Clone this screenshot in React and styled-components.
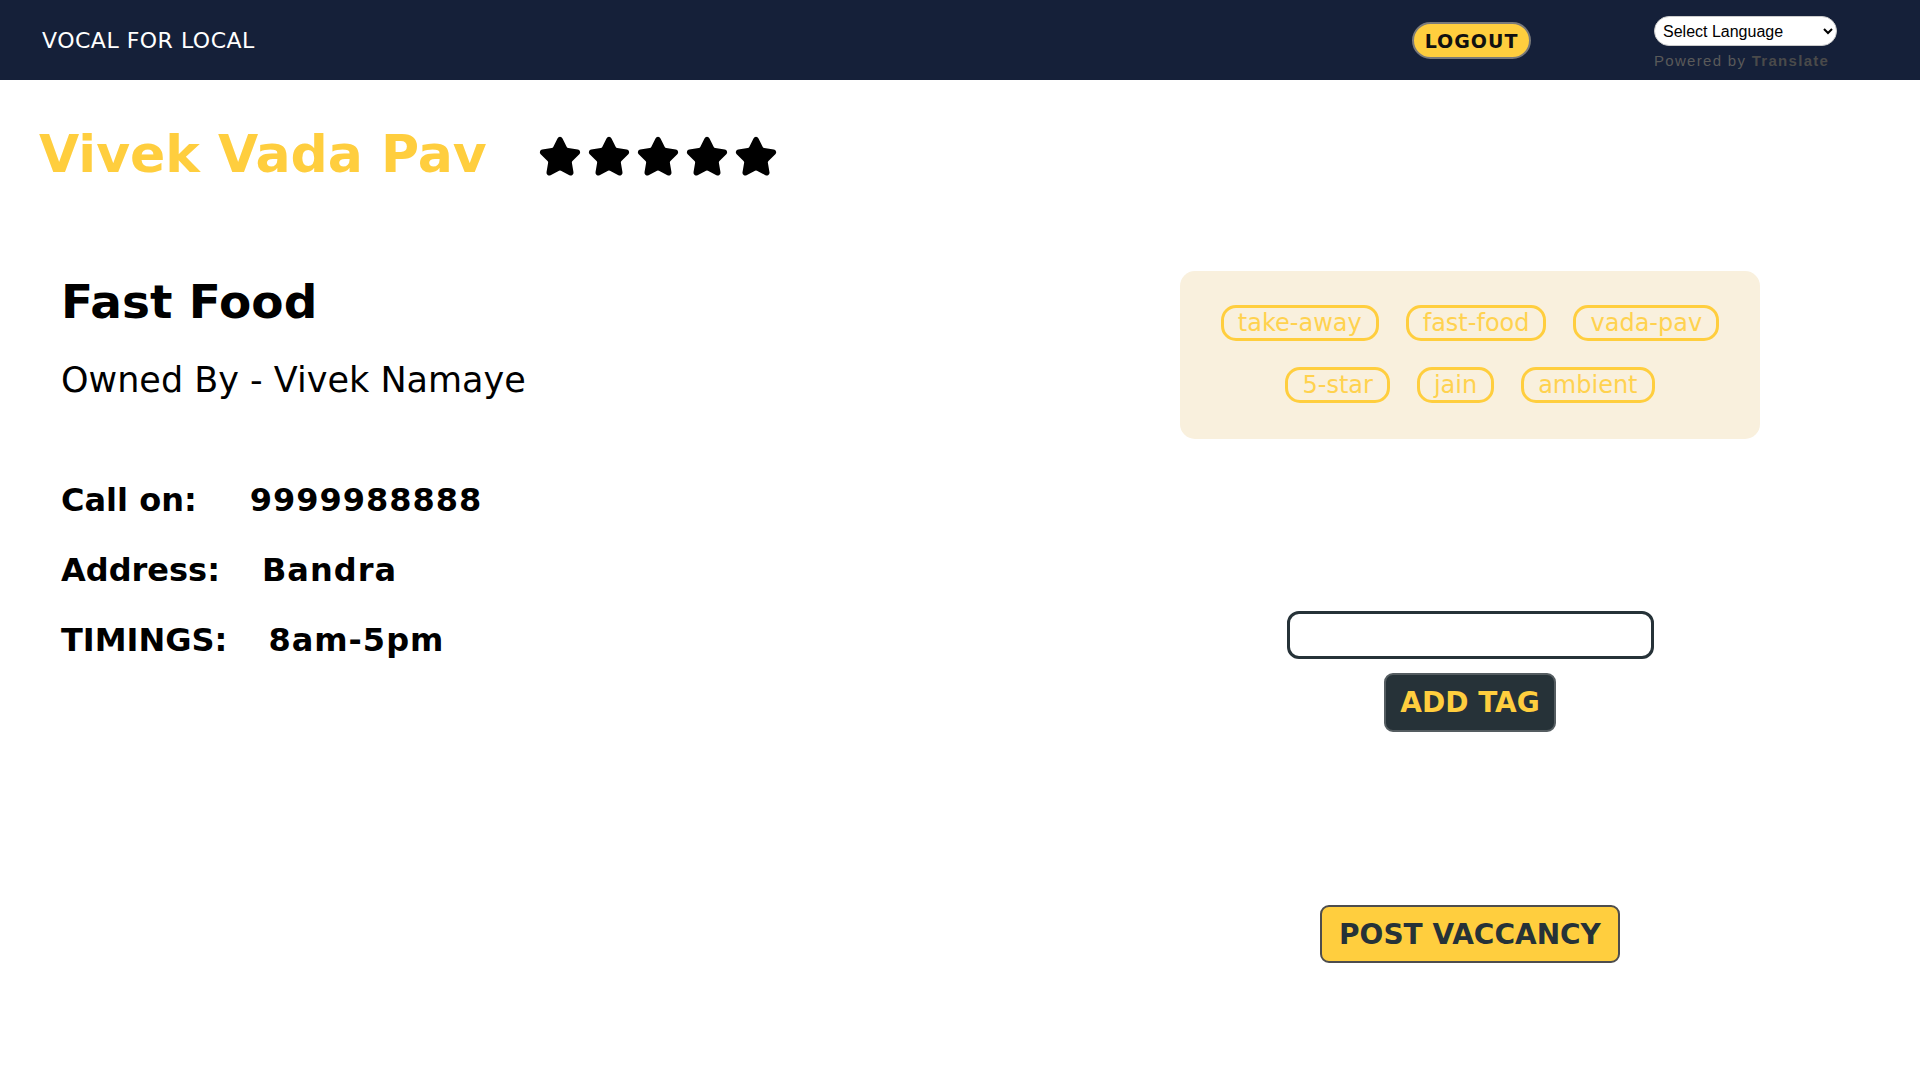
import React from 'react';
import styled, { createGlobalStyle } from 'styled-components';
import { Star } from 'lucide-react';

const YELLOW = '#FFCE3E';
const NAVY = '#152039';
const SLATE = '#263238';
const FONT = `'DejaVu Sans', 'Noto Sans', sans-serif`;

const GlobalStyle = createGlobalStyle`
    * {
        box-sizing: border-box;
    }
    body {
        margin: 0;
        background: #ffffff;
        font-family: ${FONT};
        color: #000000;
    }
`

const Nav = styled.nav `
    display: flex;
    justify-content: space-between;
    align-items: flex-start;
    height: 80px;
    padding: 0 83px 0 42px;
    background-color: ${NAVY};
`

const Brand = styled.div `
    margin-top: 30px;
    font-size: 22px;
    line-height: 1;
    letter-spacing: 0.5px;
    color: #ffffff;
`

const NavRight = styled.div `
    display: flex;
    align-items: flex-start;
    gap: 123px;
`

const LogoutButton = styled.button `
    margin-top: 22px;
    width: 119px;
    height: 37px;
    border: 2px solid #7a7a7a;
    border-radius: 20px;
    background-color: ${YELLOW};
    font-family: ${FONT};
    font-size: 19px;
    font-weight: 600;
    letter-spacing: 1px;
    color: #111111;
    cursor: pointer;
`

const Translate = styled.div `
    display: flex;
    flex-direction: column;
    margin-top: 16px;
`

const LangSelect = styled.select `
    width: 183px;
    height: 30px;
    padding: 0 4px;
    border: 1px solid #cccccc;
    border-radius: 15px;
    background: #ffffff;
    font-family: 'Liberation Sans', Arial, sans-serif;
    font-size: 16px;
    color: #000000;
`

const PoweredBy = styled.div `
    margin-top: 7px;
    font-family: 'Liberation Sans', Arial, sans-serif;
    font-size: 15px;
    line-height: 1;
    letter-spacing: 1.3px;
    color: #5a5a5a;
    white-space: nowrap;

    b {
        color: #4a4a4a;
    }
`

const TitleRow = styled.div `
    display: flex;
    align-items: center;
    gap: 51px;
    padding: 48px 0 0 39px;
`

const Title = styled.h1 `
    margin: 0;
    font-size: 52px;
    font-weight: 700;
    line-height: 1;
    color: ${YELLOW};
`

const Stars = styled.div `
    display: flex;
    gap: 5px;
    margin-top: 6px;
`

const Body = styled.div `
    display: grid;
    grid-template-columns: 1fr 900px;
    margin-top: 91px;
`

const Details = styled.div `
    padding: 7px 0 0 61px;
`

const Category = styled.h2 `
    margin: 0;
    font-size: 47px;
    font-weight: 700;
    line-height: 1;
`

const Owner = styled.p `
    margin: 38px 0 0;
    font-size: 35px;
    font-weight: 400;
    line-height: 1;
`

const InfoList = styled.div `
    display: flex;
    flex-direction: column;
    gap: 38px;
    margin-top: 86px;
`

const InfoRow = styled.div `
    display: flex;
    font-size: 32px;
    font-weight: 700;
    line-height: 1;
`

const Value = styled.span `
    margin-left: ${props => props.$gap}px;
    letter-spacing: 1px;
`

const Side = styled.div `
    display: flex;
    flex-direction: column;
    align-items: center;
`

const TagBox = styled.div `
    display: flex;
    flex-wrap: wrap;
    justify-content: center;
    gap: 26px 27px;
    width: 580px;
    padding: 34px 16px 36px;
    border-radius: 15px;
    background-color: #F9F0DD;
`

const Tag = styled.span `
    height: 36px;
    padding: 0 14px;
    border: 3px solid ${YELLOW};
    border-radius: 15px;
    font-size: 24px;
    line-height: 30px;
    color: #FFD24F;
`

const TagForm = styled.div `
    display: flex;
    flex-direction: column;
    align-items: center;
    gap: 14px;
    margin-top: 172px;
`

const TagInput = styled.input `
    width: 367px;
    height: 48px;
    border: 3px solid ${SLATE};
    border-radius: 12px;
    outline: none;
`

const ActionButton = styled.button `
    height: 59px;
    padding: 0 ${props => props.$pad}px;
    border: 2px solid ${props => props.$dark ? '#555d61' : '#4d4d4d'};
    border-radius: 9px;
    background-color: ${props => props.$dark ? SLATE : YELLOW};
    font-family: ${FONT};
    font-size: 28px;
    font-weight: 700;
    color: ${props => props.$dark ? YELLOW : SLATE};
    cursor: pointer;
`

const PostButton = styled(ActionButton) `
    height: 58px;
    margin-top: 173px;
`

const tags = ['take-away', 'fast-food', 'vada-pav', '5-star', 'jain', 'ambient'];

const info = [
    { label: 'Call on:', value: '9999988888', gap: 53 },
    { label: 'Address:', value: 'Bandra', gap: 42 },
    { label: 'TIMINGS:', value: '8am-5pm', gap: 41 },
];

const App = () => {
    return (
        <>
            <GlobalStyle />
            <Nav>
                <Brand>VOCAL FOR LOCAL</Brand>
                <NavRight>
                    <LogoutButton>LOGOUT</LogoutButton>
                    <Translate>
                        <LangSelect defaultValue=''>
                            <option value=''>Select Language</option>
                        </LangSelect>
                        <PoweredBy>Powered by <b>Translate</b></PoweredBy>
                    </Translate>
                </NavRight>
            </Nav>
            <TitleRow>
                <Title>Vivek Vada Pav</Title>
                <Stars>
                    {[0, 1, 2, 3, 4].map(i => (
                        <Star key={i} size={44} fill='#000' color='#000' strokeWidth={2} />
                    ))}
                </Stars>
            </TitleRow>
            <Body>
                <Details>
                    <Category>Fast Food</Category>
                    <Owner>Owned By - Vivek Namaye</Owner>
                    <InfoList>
                        {info.map(row => (
                            <InfoRow key={row.label}>
                                <span>{row.label}</span>
                                <Value $gap={row.gap}>{row.value}</Value>
                            </InfoRow>
                        ))}
                    </InfoList>
                </Details>
                <Side>
                    <TagBox>
                        {tags.map(t => <Tag key={t}>{t}</Tag>)}
                    </TagBox>
                    <TagForm>
                        <TagInput type='text' />
                        <ActionButton $dark $pad={14}>ADD TAG</ActionButton>
                    </TagForm>
                    <PostButton $pad={17}>POST VACCANCY</PostButton>
                </Side>
            </Body>
        </>
    );
}

export default App;
